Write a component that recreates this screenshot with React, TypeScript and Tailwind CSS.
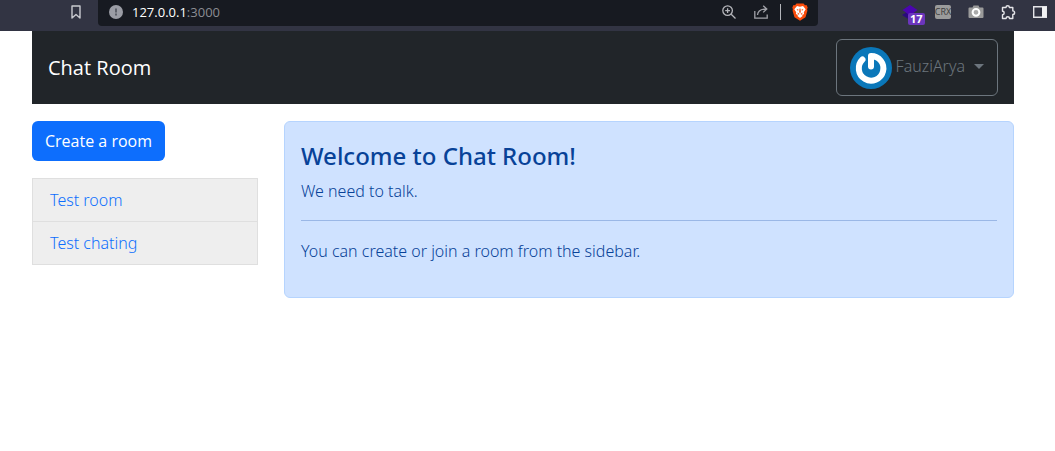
import React from "react";

const rooms = ["Test room", "Test chating"];

function BookmarkIcon() {
  return (
    <svg width="10" height="14" viewBox="0 0 10 14" fill="none" stroke="#c9cad0" strokeWidth="1.4">
      <path d="M1 1h8v12L5 9.5 1 13z" strokeLinejoin="round" />
    </svg>
  );
}

function InfoIcon() {
  return (
    <svg width="14" height="14" viewBox="0 0 14 14">
      <circle cx="7" cy="7" r="7" fill="#9b9da5" />
      <path d="M6 3.5h2v4H6zM6 8.6h2v2H6z" fill="#5d6069" />
    </svg>
  );
}

function ZoomIcon() {
  return (
    <svg width="14" height="14" viewBox="0 0 14 14" fill="none" stroke="#b4b5ba" strokeWidth="1.3">
      <circle cx="5.6" cy="5.6" r="4.8" />
      <path d="M9.2 9.2 13.5 13.5M3.2 5.6H8M5.6 3.2V8" />
    </svg>
  );
}

function ShareIcon() {
  return (
    <svg width="14" height="14" viewBox="0 0 14 14" fill="none" stroke="#a2a3a9" strokeWidth="1.3">
      <path d="M.8 6v7.2h12.4V9.5M3.5 10C3.8 6 6.5 4 12.5 4M9.2 .8l3.6 3.2-3.6 3.4" />
    </svg>
  );
}

function BraveIcon() {
  return (
    <svg width="16" height="18" viewBox="0 0 16 18">
      <path d="M4.5.5h7L13 2.200l1.500-.2 1.200 2.600-.6 1.600.3 1.500-1.900 6.500L8 17.800 2.500 14.200.6 7.700l.3-1.500-.6-1.600L1.500 2 3 2.200z" fill="#fb4c0b" />
      <path d="m5 3 3 .7L11 3l2.700 3.300-1.900 2.900.3 1.800-2 1 .5 1L8 15l-2.600-2 .5-1-2-1 .3-1.800-1.900-2.900z" fill="#fff" />
      <path d="m4.500 6 2 .6-.5 1.300zM11.500 6l-2 .6.500 1.300zM7.500 5.500h1l.3 3.500L8 10.500 7.200 9zM5.500 9.500 7.500 11l-1.500.7zM10.500 9.500 8.500 11l1.500.7z" fill="#fb4c0b" />
    </svg>
  );
}

function LayersIcon() {
  return (
    <svg width="16" height="15" viewBox="0 0 16 15">
      <path d="M0 10 5 7l8 3-5 5z" fill="#2a0a7c" />
      <path d="m8 0 7.500 5-7.500 5.500L.5 5z" fill="#4b05b0" />
    </svg>
  );
}

function CameraIcon() {
  return (
    <svg width="16" height="14" viewBox="0 0 16 14">
      <path d="M1.500 2.500h3L5.500.5h5l1 2h3q1 0 1 1v8.500q0 1-1 1h-13q-1 0-1-1V3.500q0-1 1-1z" fill="#9b9b9b" />
      <circle cx="8" cy="7.300" r="3.400" fill="#aaa" stroke="#fff" strokeWidth="2" />
    </svg>
  );
}

function PuzzleIcon() {
  return (
    <svg width="15" height="15" viewBox="0 0 15 15" fill="none" stroke="#e4e4e8" strokeWidth="1.400" strokeLinejoin="round">
      <path d="M1.500 2.500H5a1.700 1.700 0 0 1 3.400 0h3.400v3.400a1.700 1.700 0 0 1 0 3.600v4H8.500a1.700 1.700 0 0 0-3.400 0H1.500v-3.800a1.700 1.700 0 0 0 0-3.400z" />
    </svg>
  );
}

function PanelIcon() {
  return (
    <svg width="14" height="12" viewBox="0 0 14 12">
      <path d="M.7.7h12.600v10.600H.7z" fill="none" stroke="#e4e4e8" strokeWidth="1.400" />
      <path d="M9 1h4.500v10H9z" fill="#f2f2f4" />
    </svg>
  );
}

function Avatar() {
  return (
    <svg width="42" height="42" viewBox="0 0 42 42">
      <circle cx="21" cy="21" r="21" fill="#0a77b9" />
      <path d="M12.500 12.500A12.300 12.300 0 1 0 21 9v10.500" fill="none" stroke="#fff" strokeWidth="6" strokeLinecap="round" strokeLinejoin="round" />
    </svg>
  );
}

function BrowserBar() {
  return (
    <div className="flex h-[31px] items-start bg-[#323443]">
      <div className="flex h-6 w-[98px] items-center justify-end pr-[17px]">
        <button aria-label="Bookmark"><BookmarkIcon /></button>
      </div>
      <div className="flex h-[26px] flex-1 items-center rounded-b bg-[#171a21] pr-2.5 pb-0.5 pl-[11px]">
        <InfoIcon />
        <span className="ml-[9px] flex-1 text-[13px] leading-6 text-[#8b8d93]">
          <span className="text-white">127.0.0.1</span>:3000
        </span>
        <button aria-label="Zoom"><ZoomIcon /></button>
        <button aria-label="Share" className="ml-[18px]"><ShareIcon /></button>
        <span className="ml-3 h-4 w-px bg-[#b4b5ba]" />
        <button aria-label="Shields" className="ml-[11px]"><BraveIcon /></button>
      </div>
      <div className="flex h-6 w-[237px] items-center justify-end gap-[17px] pr-2">
        <button aria-label="Layers, 17" className="relative">
          <LayersIcon />
          <span className="absolute top-2 left-1.5 rounded-xs bg-[#6b35bd] px-0.5 text-[11px] leading-3 font-bold text-white">17</span>
        </button>
        <button className="flex h-3.5 w-4 items-center justify-center rounded-xs bg-[#9b9b9b] text-[9px] leading-3.5 text-[#3b3b3b]">CRX</button>
        <button aria-label="Camera"><CameraIcon /></button>
        <button aria-label="Extensions"><PuzzleIcon /></button>
        <button aria-label="Side panel"><PanelIcon /></button>
      </div>
    </div>
  );
}

export default function App() {
  return (
    <div className="min-h-screen bg-white font-['Open_Sans','Noto_Sans',sans-serif] text-base [&_svg]:block">
      <BrowserBar />
      <div className="pr-[41px] pl-8">
        <nav className="flex items-center justify-between bg-[#212529] px-4 py-2">
          <a href="#" className="text-xl text-white">Chat Room</a>
          <button className="flex items-center rounded-md border border-[#6c757d] px-[13px] pt-[7px] pb-1.5 font-['Noto_Sans',sans-serif] font-light text-[#6c757d]">
            <Avatar />
            <span className="ml-1 pb-1">FauziArya</span>
            <span className="mb-1 ml-[9px] border-x-5 border-t-5 border-x-transparent border-t-[#6c757d]" />
          </button>
        </nav>
        <main className="mt-[17px] grid grid-cols-12 gap-[26px]">
          <aside className="col-span-3">
            <button className="h-10 rounded-md bg-[#0d6efd] px-[13px] text-white">Create a room</button>
            <ul className="mt-[17px] divide-y divide-[#dfdfdf] border border-[#dfdfdf] bg-[#eee]">
              {rooms.map((room) => (
                <li key={room}>
                  <a href="#" className="block px-[17px] py-[9px] font-['Noto_Sans',sans-serif] font-light text-[#0d6efd]">{room}</a>
                </li>
              ))}
            </ul>
          </aside>
          <section className="col-span-9 rounded-md border border-[#b6d4fe] bg-[#cfe2ff] px-4 py-[17px] font-['Noto_Sans',sans-serif] font-light text-[#084298]">
            <h1 className="text-2xl leading-[34px] font-medium">Welcome to Chat Room!</h1>
            <p className="mt-1.5">We need to talk.</p>
            <hr className="mt-[17px] mb-[18px] border-[#9ab7e6]" />
            <p className="mb-[17px]">You can create or join a room from the sidebar.</p>
          </section>
        </main>
      </div>
    </div>
  );
}
